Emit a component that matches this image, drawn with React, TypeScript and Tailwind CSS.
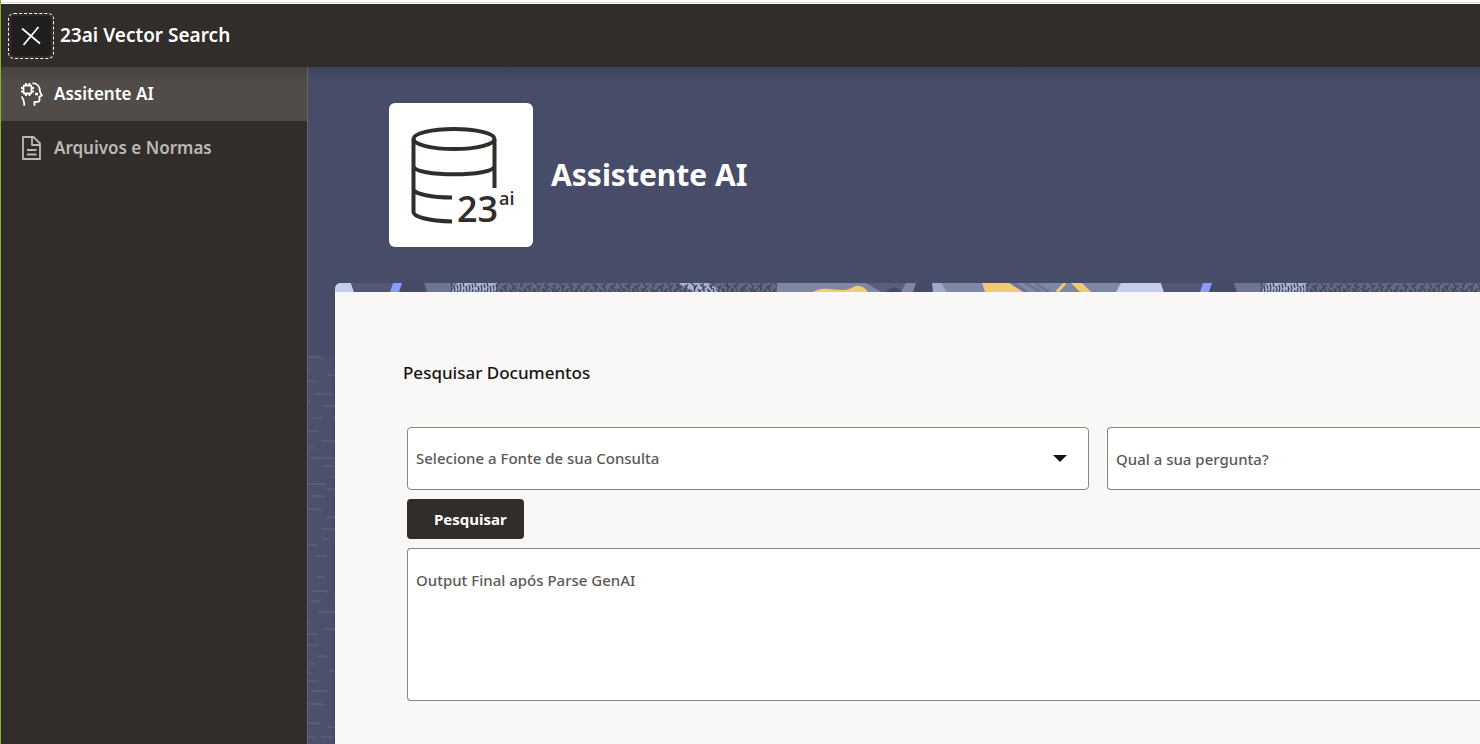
import React from "react";

const dashes: [number, number, number][] = [
  [0, 16, 13], [0, 28, 3], [20, 34, 7], [0, 40, 8], [7, 53, 18], [16, 65, 11], [0, 61, 3], [6, 77, 9], [25, 76, 3],
  [0, 90, 11], [14, 100, 13], [0, 107, 7], [3, 117, 24], [16, 125, 11], [23, 136, 4], [0, 143, 18], [19, 148, 8],
  [2, 155, 15], [0, 168, 13], [18, 176, 9], [14, 188, 13], [15, 198, 7], [0, 204, 9], [8, 215, 11], [9, 236, 8],
  [4, 250, 16], [26, 259, 2], [2, 260, 10], [10, 271, 17], [0, 280, 2], [17, 288, 10], [0, 293, 9], [0, 304, 10],
  [9, 315, 10], [0, 323, 8], [21, 330, 6], [0, 332, 4], [0, 340, 11], [3, 350, 17], [0, 363, 17], [0, 382, 12],
  [20, 386, 7], [0, 396, 8], [13, 396, 12],
];

function Texture() {
  return (
    <svg className="absolute left-0 top-[288px] h-[400px] w-[27px]" viewBox="0 0 27 400" aria-hidden="true">
      <rect width="27" height="400" fill="#4c506d" />
      {dashes.map(([x, y, w], i) => (
        <path key={i} d={`M${x} ${y - 14}q${w / 2} -.5 ${w} .5`} stroke="#5b5e7a" strokeWidth="1.8" fill="none" />
      ))}
    </svg>
  );
}

const hatch = Array.from({ length: 110 }, (_, i) => {
  const x = 118 + i * 3;
  const lean = i < 16 ? 1 : ((i * 7) % 11) - 5;
  return `M${x} ${(i * 3) % 4}l${lean} 4M${x + 1} ${5 + (i % 3)}l${-lean} 4`;
}).join("");

function BannerStrip() {
  return (
    <svg className="block h-[9px] w-full" aria-hidden="true">
      <defs>
        <pattern id="banner" width="810" height="9" x="-2" patternUnits="userSpaceOnUse">
          <rect width="810" height="9" fill="#464a66" />
          <path d="M0 0h18l3 9H0z" fill="#c6cdea" />
          <path d="M18 0h42l-3 9H21z" fill="#535675" />
          <path d="M60 0h9l-3 9h-9z" fill="#8b9aff" />
          <path d="M91 0h33l-6 9H94z" fill="#6e7593" />
          <path d="M124 0h40v9h-46z" fill="#a8b1cf" />
          <path d="M164 0h280v9H164z" fill="#636985" />
          <path d="M345 0h30l15 9h-30z" fill="#a8b1cf" />
          <path d={hatch} stroke="#3f4560" strokeWidth="1.3" fill="none" />
          <path d="M444 0h348l-8 9H444z" fill="#8087a5" />
          <path d="M533 0h40l-5 9h-20z" fill="#5a5e7d" />
          <path d="M553 9q8-9 16 0z" fill="#464a66" />
          <path d="M480 9c8-6 20-2 30-2s10-5 16-4 7 4 9 6z" fill="#f0cc70" />
          <path d="M583 0h18v9h-21z" fill="#464a66" />
          <path d="M599 0h9l6 9h-14z" fill="#a0a9cb" />
          <path d="M649 0h27l14 9h-38z" fill="#f0cc70" />
          <path d="M680 0l14 9M692 0l16 9M702 0l14 9" stroke="#6e7593" strokeWidth="3" />
          <path d="M732 0l-8 9" stroke="#f0cc70" strokeWidth="3" />
          <path d="M738 0h11l9 9h-11z" fill="#f0cc70" />
          <path d="M788 0h22v9h-27z" fill="#c6cdea" />
        </pattern>
      </defs>
      <rect width="100%" height="9" fill="url(#banner)" />
    </svg>
  );
}

function AiHeadIcon() {
  return (
    <svg className="size-6 shrink-0" viewBox="0 0 24 24" fill="none" stroke="currentColor" strokeWidth="1.8" aria-hidden="true">
      <rect x="3.5" y="3.5" width="8" height="8" rx="1" />
      <path d="M6 3.500V1M9.500 3.500V1M6 11.500v2.500M9.500 11.500v2.500M3.500 6H1M3.500 9.500H1M11.500 6H14M11.500 9.500H14" />
      <path d="M12.500 1.200c4.800.3 7.300 3.500 7.300 7.300 0 1.500.9 2.800 2 5L19.500 14.500v3.500c0 1.200-.7 1.800-2 1.800H14.500v4M1.500 14.500c2.200 2.500 2.800 5 2.800 9.300" />
      <path d="M15 12h3" strokeWidth="2.4" />
    </svg>
  );
}

function DocumentIcon() {
  return (
    <svg className="size-6 shrink-0" viewBox="0 0 24 24" fill="none" stroke="currentColor" strokeWidth="1.8" strokeLinejoin="round" aria-hidden="true">
      <path d="M3 1h10.500L20 7.500V23H3zM12 1v8h8M7 14h9.500M7 18.500h9.500" />
    </svg>
  );
}

function DatabaseLogo() {
  return (
    <svg className="size-36 shrink-0 rounded-md bg-white" viewBox="0 0 144 144" role="img" aria-label="23ai">
      <g fill="none" stroke="#312d2a" strokeWidth="4">
        <ellipse cx="65" cy="36" rx="40.500" ry="10" />
        <path d="M24.500 36v73c0 4.500 14 9 38.500 9.500M105.500 36v49M24.500 63c0 11 81 11 81 0M24.500 87c3 4 17 7.500 38.500 7.500" />
      </g>
      <g fill="#312d2a" fontFamily="'Open Sans', sans-serif" fontWeight="600">
        <text x="68" y="119" fontSize="36">23</text>
        <text x="110" y="102" fontSize="18">ai</text>
      </g>
    </svg>
  );
}

export default function App() {
  return (
    <div className="flex min-h-screen flex-col overflow-hidden border-l border-[#86b817] bg-[#312d2a] font-['Noto_Sans','Open_Sans',sans-serif]">
      <div className="h-1 border-b border-white bg-white pt-[2px]">
        <div className="h-px bg-[#dce0d8]" />
      </div>
      <header className="flex h-[63px] items-center gap-[6px] bg-[#312d2a] pl-[7px] text-white">
        <button type="button" aria-label="Fechar menu" className="grid size-[46px] place-items-center rounded-md border border-dashed border-white p-[2px]">
          <span className="grid size-10 place-items-center rounded bg-[#201f1e]">
            <svg className="size-5" viewBox="0 0 20 20" fill="none" stroke="currentColor" strokeWidth="1.8" aria-hidden="true">
              <path d="M1 2.500l18 15M17.500 1L2.500 19" />
            </svg>
          </span>
        </button>
        <span className="text-[19px] font-semibold">23ai Vector Search</span>
      </header>
      <div className="flex flex-1">
        <nav className="w-[307px] shrink-0 border-r border-[#6b6661] text-[17px] font-semibold">
          <a href="#assistente" aria-current="page" className="flex h-[54px] items-center gap-[10px] bg-linear-to-b from-[#46413c] to-[#514c47] to-30% pl-[19px] text-white">
            <AiHeadIcon />
            Assitente AI
          </a>
          <a href="#arquivos" className="flex h-[54px] items-center gap-[10px] pl-[19px] text-[#bcb9b6]">
            <DocumentIcon />
            Arquivos e Normas
          </a>
        </nav>
        <main className="relative flex min-w-0 flex-1 flex-col bg-[#474c68] bg-linear-to-b from-[#3d415a] to-[#474c68] to-[12px]">
          <Texture />
          <div className="flex items-center gap-[18px] px-[81px] py-9">
            <DatabaseLogo />
            <h1 className="text-3xl font-bold text-white">Assistente AI</h1>
          </div>
          <section className="relative ml-[27px] flex flex-1 flex-col overflow-hidden rounded-tl-md bg-[#f9f8f6] shadow-lg">
            <BannerStrip />
            <form className="pl-[72px] pt-[65px]" onSubmit={(e) => e.preventDefault()}>
              <h2 className="-ml-1 text-[17px] font-medium leading-8 text-[#161513]">Pesquisar Documentos</h2>
              <div className="mt-[38px] grid grid-cols-[682fr_373fr] gap-x-[18px]">
                <div className="relative">
                  <select aria-label="Selecione a Fonte de sua Consulta" defaultValue="" className="h-[63px] w-full appearance-none rounded border border-[#8b8580] bg-white px-2 text-[15px] font-medium text-[#5c5855]">
                    <option value="">Selecione a Fonte de sua Consulta</option>
                  </select>
                  <svg className="pointer-events-none absolute right-[22px] top-[28px] h-[7px] w-[14px]" viewBox="0 0 14 7" aria-hidden="true">
                    <path d="M0 0h14L7 7z" fill="#161513" />
                  </svg>
                </div>
                <input aria-label="Qual a sua pergunta?" placeholder="Qual a sua pergunta?" className="h-[63px] w-full min-w-0 rounded-l border border-r-0 border-[#8b8580] bg-white px-2 text-[15px] font-medium placeholder:text-[#5c5855]" />
              </div>
              <button type="submit" className="mt-[9px] block h-10 rounded bg-[#312d2a] pl-[27px] pr-[17px] text-[15px] font-bold text-white">
                Pesquisar
              </button>
              <textarea aria-label="Output Final após Parse GenAI" placeholder="Output Final após Parse GenAI" className="mt-[9px] block h-[153px] w-full resize-none rounded-l border border-r-0 border-[#8b8580] bg-white px-2 py-[19px] text-[15px] font-medium leading-6 placeholder:text-[#5c5855]" />
            </form>
          </section>
        </main>
      </div>
    </div>
  );
}
